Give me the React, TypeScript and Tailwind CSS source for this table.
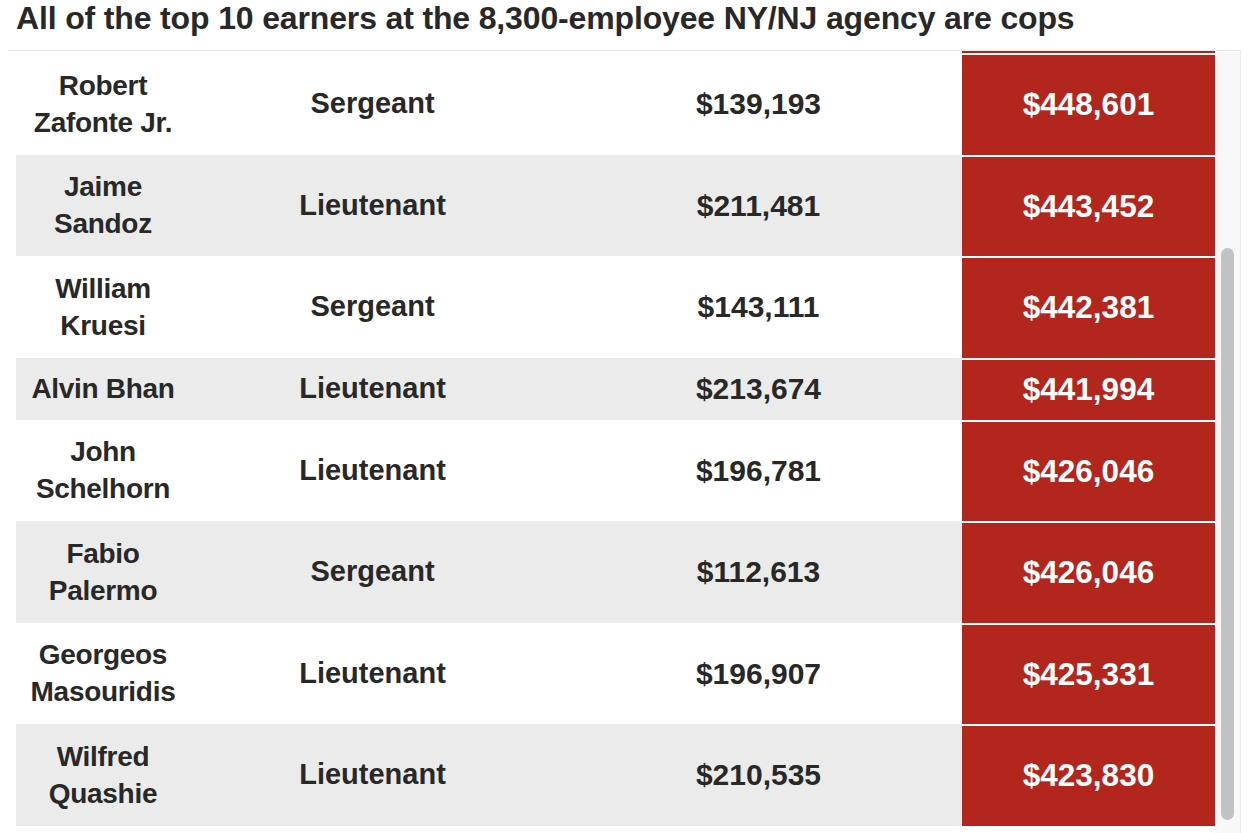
const ROWS = [
  { name: ["Robert", "Zafonte Jr."], rank: "Sergeant", base: "$139,193", total: "$448,601" },
  { name: ["Jaime", "Sandoz"], rank: "Lieutenant", base: "$211,481", total: "$443,452" },
  { name: ["William", "Kruesi"], rank: "Sergeant", base: "$143,111", total: "$442,381" },
  { name: ["Alvin Bhan"], rank: "Lieutenant", base: "$213,674", total: "$441,994" },
  { name: ["John", "Schelhorn"], rank: "Lieutenant", base: "$196,781", total: "$426,046" },
  { name: ["Fabio", "Palermo"], rank: "Sergeant", base: "$112,613", total: "$426,046" },
  { name: ["Georgeos", "Masouridis"], rank: "Lieutenant", base: "$196,907", total: "$425,331" },
  { name: ["Wilfred", "Quashie"], rank: "Lieutenant", base: "$210,535", total: "$423,830" },
];

const COLS = "grid grid-cols-[174px_365px_407px_253px]";

export default function App() {
  return (
    <div
      className="w-[1250px] h-[833px] overflow-hidden bg-white text-[#282828]"
      style={{ fontFamily: '"Liberation Sans", Arial, sans-serif' }}
    >
      {/* TITLE */}
      <h1 className="h-[50px] pl-4 text-[32px] leading-[36px] font-bold tracking-[-0.15px] whitespace-nowrap">
        All of the top 10 earners at the 8,300-employee NY/NJ agency are cops
      </h1>

      {/* TABLE + SCROLLBAR */}
      <div className="flex h-[783px] border-t border-[#e6e6e6] ml-2 w-[1233px] border-r border-r-[#ececec]">
        <div className="pl-2 w-[1207px]">
          {/* remnant of the row scrolled above */}
          <div className={COLS}>
            <div className="col-span-3" />
            <div className="h-[2px] bg-[#b3261d]" />
          </div>
          {ROWS.map((r, i) => (
            <div
              key={i}
              className={`${COLS} ${i % 2 === 1 ? "bg-[#ebebeb]" : "bg-white"}`}
            >
              <div className="flex flex-col items-center justify-center text-center text-[28px] leading-[37px] font-bold tracking-[-0.3px]">
                {r.name.map((n) => (
                  <span key={n}>{n}</span>
                ))}
              </div>
              <div className="flex items-center justify-center text-[29px] font-bold">
                {r.rank}
              </div>
              <div className="flex items-center justify-center text-[30px] font-bold">
                {r.base}
              </div>
              <div className="bg-white pt-[2px]">
                <div
                  className={`flex items-center justify-center bg-[#b3261d] text-white text-[31.5px] font-bold ${
                    r.name.length > 1 ? "h-[99.5px]" : "h-[60px]"
                  }`}
                >
                  {r.total}
                </div>
              </div>
            </div>
          ))}
        </div>

        {/* SCROLL TRACK */}
        <div className="flex-1 bg-[#f8f8f8] flex justify-center">
          <div className="w-[13px] h-[572px] mt-[197px] rounded-full bg-[#c2c2c2]" />
        </div>
      </div>
    </div>
  );
}
